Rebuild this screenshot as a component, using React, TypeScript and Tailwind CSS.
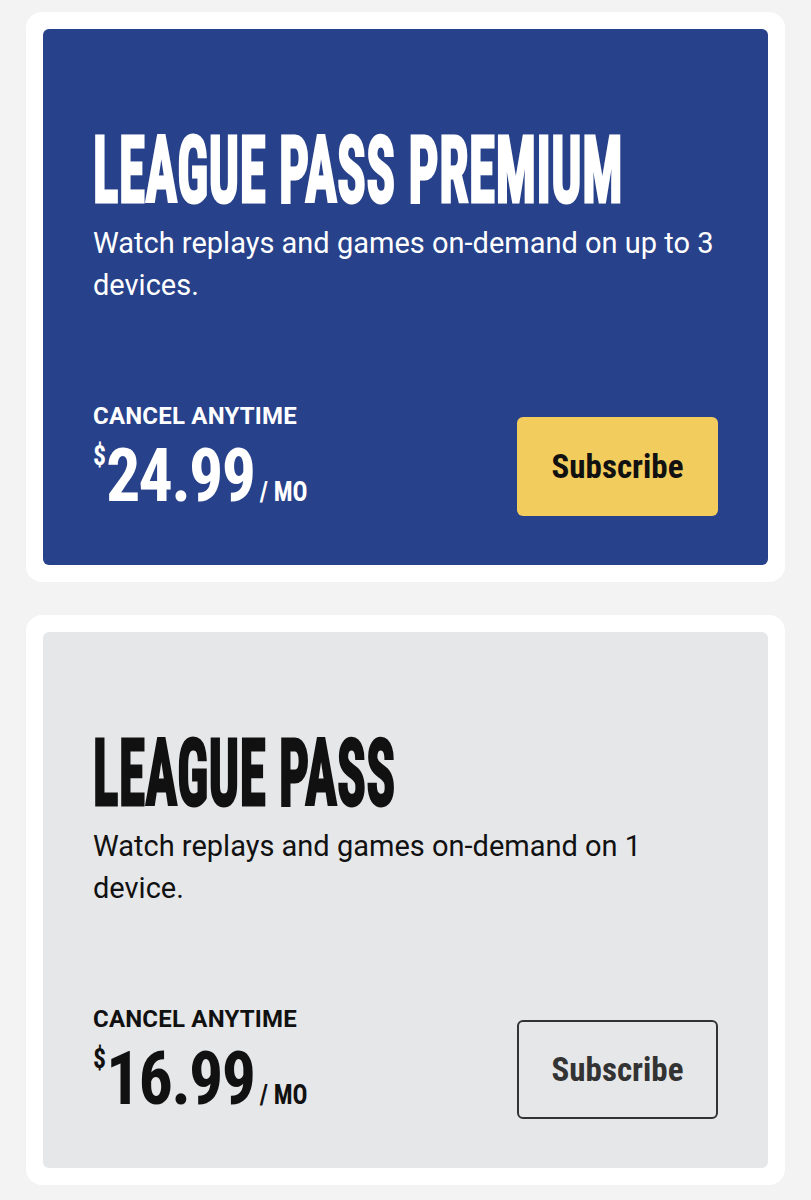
type Plan = {
  name: string
  blurb: string
  price: string
  featured?: boolean
}

const plans: Plan[] = [
  {
    name: 'LEAGUE PASS PREMIUM',
    blurb: 'Watch replays and games on-demand on up to 3 devices.',
    price: '24.99',
    featured: true,
  },
  {
    name: 'LEAGUE PASS',
    blurb: 'Watch replays and games on-demand on 1 device.',
    price: '16.99',
  },
]

function PlanCard({ plan }: { plan: Plan }) {
  const dark = plan.featured

  return (
    <div className="rounded-2xl bg-white p-[17px]">
      <div
        className={
          dark
            ? 'flex h-[536px] flex-col rounded-md bg-[#27418a] px-[50px] pt-[95px] pb-[49px] text-white'
            : 'flex h-[536px] flex-col rounded-md bg-[#e6e7e9] px-[50px] pt-[95px] pb-[49px] text-[#111]'
        }
      >
        {/* Plan title + description */}
        <h2 className="origin-left scale-x-[0.57] whitespace-nowrap font-['Roboto_Condensed',sans-serif] text-[93px] font-bold leading-none tracking-[1px] [-webkit-text-stroke:3px_currentColor]">
          {plan.name}
        </h2>
        <p className="mt-[5px] font-['Roboto',sans-serif] text-[29px] leading-[42px]">
          {plan.blurb}
        </p>

        {/* Price + CTA */}
        <div className="mt-auto flex items-end justify-between">
          <div className="mb-[3px]">
            <p className="font-['Roboto',sans-serif] text-[24px] font-bold leading-[28px] tracking-[0.2px]">
              CANCEL ANYTIME
            </p>
            <div className="mt-[9px] flex origin-left scale-x-[0.92] items-start font-['Roboto_Condensed',sans-serif] font-bold">
              <span className="mt-[3px] text-[28px] leading-none">$</span>
              <div className="flex items-baseline">
                <span className="text-[74px] leading-none tracking-[-2px]">{plan.price}</span>
                <span className="ml-[6px] text-[27px] leading-none">/ MO</span>
              </div>
            </div>
          </div>
          <button
            className={
              dark
                ? "h-[99px] w-[201px] rounded-md bg-[#f3cc5e] font-['Roboto_Condensed',sans-serif] text-[33px] font-bold text-[#111]"
                : "h-[99px] w-[201px] rounded-md border-2 border-[#333] bg-transparent font-['Roboto_Condensed',sans-serif] text-[33px] font-bold text-[#333]"
            }
          >
            Subscribe
          </button>
        </div>
      </div>
    </div>
  )
}

export default function App() {
  return (
    <div className="flex min-h-[1200px] flex-col gap-[33px] bg-[#f3f3f3] px-[26px] pt-[12px]">
      {plans.map((plan) => (
        <PlanCard key={plan.name} plan={plan} />
      ))}
    </div>
  )
}
